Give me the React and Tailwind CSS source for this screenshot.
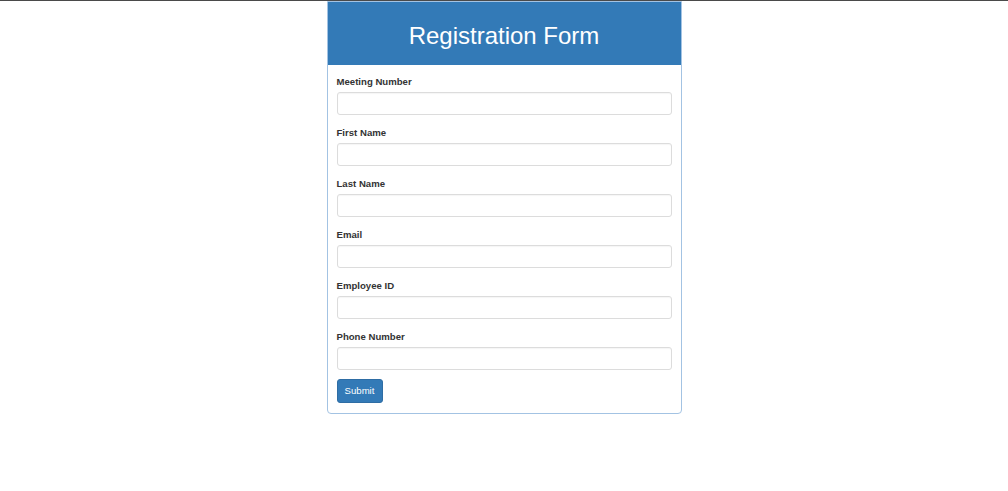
import React from "react";

const fields = [
	"Meeting Number",
	"First Name",
	"Last Name",
	"Email",
	"Employee ID",
	"Phone Number",
];

const Field = ({ label }) => {
	return (
		<div className="flex flex-col">
			<label className="text-[9.6px] leading-[13px] font-bold text-[#333] mb-[4px]">
				{label}
			</label>
			<input
				type="text"
				className="h-[23px] w-full border border-[#dcdcdc] rounded-[3px] bg-white shadow-[inset_0_1px_1px_rgba(0,0,0,0.04)] outline-none"
			/>
		</div>
	);
};

const App = () => {
	return (
		<div
			className="min-h-[491px] bg-white border-t border-[#4a4a4a]"
			style={{ fontFamily: '"Liberation Sans", Arial, sans-serif' }}
		>
			<div className="w-[355px] mx-auto border border-[#a3c3e3] rounded-b-[4px] bg-white">
				<div className="h-[63px] bg-[#337ab7] flex items-center justify-center pt-[5px]">
					<h3 className="text-[24px] leading-none text-white font-normal">
						Registration Form
					</h3>
				</div>
				<div className="px-[9px] pt-[10px] pb-[10px]">
					<div className="flex flex-col gap-[11px]">
						{fields.map((f) => (
							<Field key={f} label={f} />
						))}
					</div>
					<button className="mt-[9px] w-[46px] h-[24px] bg-[#337ab7] border border-[#2e6da4] rounded-[3px] text-white text-[9.6px] leading-none">
						Submit
					</button>
				</div>
			</div>
		</div>
	);
};

export default App;
